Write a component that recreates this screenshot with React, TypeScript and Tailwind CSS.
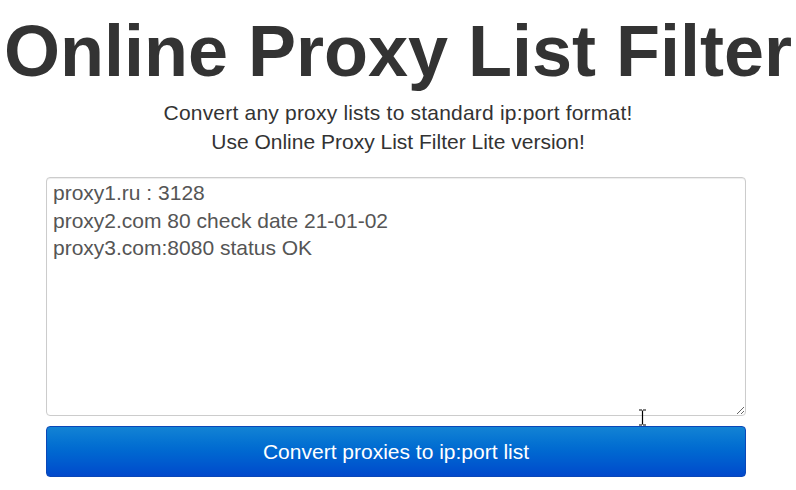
import React from "react"

const sample = `proxy1.ru : 3128
proxy2.com 80 check date 21-01-02
proxy3.com:8080 status OK`

export default function App() {
  return (
    <div className="relative min-h-[490px] w-full bg-white text-[#333] font-['Liberation_Sans',Arial,sans-serif]">
      <h1 className="pt-[11px] text-center text-[72px] font-bold leading-[80px] whitespace-nowrap">
        Online Proxy List Filter
      </h1>
      <div className="mt-[7px] text-center text-[21px] leading-[29px]">
        <p className="tracking-[0.2px]">Convert any proxy lists to standard ip:port format!</p>
        <p>Use Online Proxy List Filter Lite version!</p>
      </div>
      <div className="mx-[46px] mt-[21px] flex flex-col gap-[10px]">
        <textarea
          defaultValue={sample}
          className="h-[239px] w-[700px] resize-y rounded-[4px] border border-[#ccc] px-[6px] pt-[1px] text-[21px] leading-[27.5px] text-[#555] shadow-[inset_0_1px_1px_rgba(0,0,0,0.075)] outline-none font-['Liberation_Sans',Arial,sans-serif]"
        />
        <button className="h-[51px] w-[700px] rounded-[4px] border border-[#0a47b8] bg-gradient-to-b from-[#1383d4] to-[#0349cc] text-[21px] text-white">
          Convert proxies to ip:port list
        </button>
      </div>
      <svg
        className="absolute left-[638px] top-[409px]"
        width="9"
        height="17"
        viewBox="0 0 9 17"
      >
        <path d="M1 1h3M5 1h3M4.5 1.5v14M1 16h3M5 16h3" stroke="#000" strokeWidth="1.2" fill="none" />
      </svg>
    </div>
  )
}
